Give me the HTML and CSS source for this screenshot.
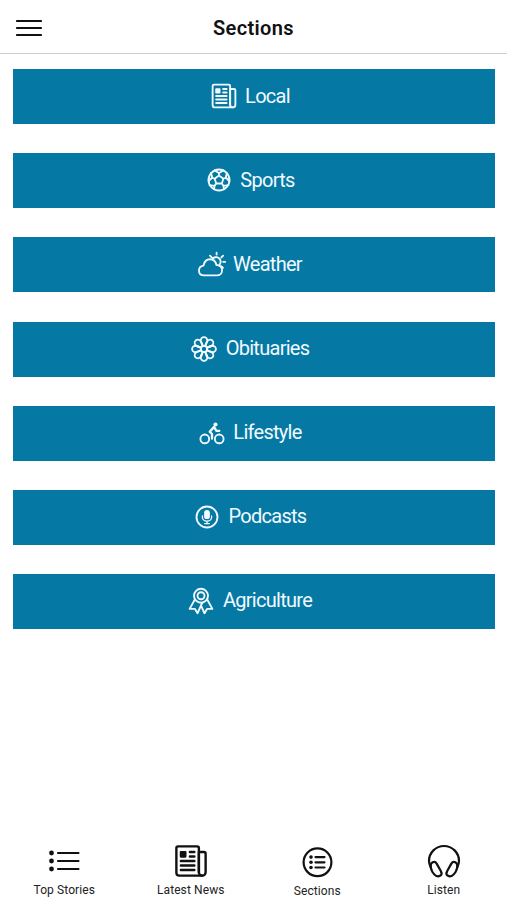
FILE: index.html
```html
<!DOCTYPE html>
<html lang="en">
<head>
<meta charset="utf-8">
<title>Sections</title>
<link rel="stylesheet" href="styles.css">
</head>
<body>
<svg class="defs" aria-hidden="true">
  <symbol id="news" viewBox="0 0 512 512">
    <path d="M368 416V72a24 24 0 0 0-24-24H72a24 24 0 0 0-24 24v352a40 40 0 0 0 40 40h328"/>
    <path d="M416 464a48 48 0 0 1-48-48V128h72a24 24 0 0 1 24 24v264a48 48 0 0 1-48 48z"/>
    <path d="M240 128h64M240 192h64M112 256h192M112 320h192M112 384h192"/>
    <rect class="solid" x="96" y="112" width="96" height="96" rx="16"/>
  </symbol>
</svg>
<header class="header">
  <svg class="menu" viewBox="0 0 26 18"><path d="M1 2h24M1 9h24M1 16h24"/></svg>
  <h1 class="title">Sections</h1>
</header>
<main class="sections">
  <a class="section"><svg class="icon"><use href="#news"/></svg><span>Local</span></a>
  <a class="section">
    <svg class="icon" viewBox="0 0 512 512"><circle cx="256" cy="256" r="192"/><path d="M256 175l-80 58 29 87h102l29-87zM256 175v-48M176 233l-45-18M205 320l-30 42M307 320l30 42M336 233l45-18M175 82l81 45 81-45M66 274l65-59-18-88M166 425l9-63-91-12M346 425l-9-63 91-12M446 274l-65-59 18-88"/></svg>
    <span>Sports</span></a>
  <a class="section">
    <svg class="icon" viewBox="0 0 512 512"><path d="M346 464H112c-53 0-94-30-94-86 0-54 39-86 82-92 14-72 60-116 120-116 63 0 103 44 117 104 56 2 103 34 103 94 0 64-46 96-94 96z"/><path d="M262 170a82 82 0 1 1 134 94M340 48v36M460 104l-32 32M220 104l30 30M460 216h36M430 300l26 26"/></svg>
    <span>Weather</span></a>
  <a class="section">
    <svg class="icon" viewBox="0 0 512 512"><circle cx="256" cy="256" r="58"/><path id="petal" d="M238 202c-24-32-42-66-42-96 0-36 27-68 60-68s60 32 60 68c0 30-18 64-42 96"/><use href="#petal" transform="rotate(45 256 256)"/><use href="#petal" transform="rotate(90 256 256)"/><use href="#petal" transform="rotate(135 256 256)"/><use href="#petal" transform="rotate(180 256 256)"/><use href="#petal" transform="rotate(225 256 256)"/><use href="#petal" transform="rotate(270 256 256)"/><use href="#petal" transform="rotate(315 256 256)"/></svg>
    <span>Obituaries</span></a>
  <a class="section">
    <svg class="icon" viewBox="0 0 512 512"><circle cx="124" cy="364" r="80"/><circle cx="388" cy="364" r="80"/><path class="bold" d="M256 360v-86l-42-42 80-88 40 72h56"/><circle class="solid" cx="320" cy="100" r="38"/></svg>
    <span>Lifestyle</span></a>
  <a class="section">
    <svg class="icon" viewBox="0 0 512 512"><circle cx="256" cy="256" r="192"/><rect class="solid" x="203" y="126" width="106" height="168" rx="53"/><path class="thin" d="M172 236v20c0 44 36 76 84 76s84-32 84-76v-20M256 332v44M214 376h84"/></svg>
    <span>Podcasts</span></a>
  <a class="section">
    <svg class="icon" viewBox="0 0 512 512"><circle cx="256" cy="160" r="128"/><circle cx="256" cy="160" r="64"/><path d="M144 228L48 400l87 0a16 16 0 0 1 14 8l43 72 88-194M367 224l97 176h-87a16 16 0 0 0-14 8l-43 72-64-141"/></svg>
    <span>Agriculture</span></a>
</main>
<nav class="tabs">
  <a class="tab"><svg class="tab-icon" viewBox="0 0 36 36"><path d="M12 10h20.500M12 18h20.500M12 26h20.500"/><circle class="solid" cx="5.500" cy="10" r="2.400"/><circle class="solid" cx="5.500" cy="18" r="2.400"/><circle class="solid" cx="5.500" cy="26" r="2.400"/></svg><span>Top Stories</span></a>
  <a class="tab"><svg class="tab-icon news"><use href="#news"/></svg><span>Latest News</span></a>
  <a class="tab low"><svg class="tab-icon" viewBox="0 0 36 36"><circle cx="18.500" cy="18.300" r="13.900"/><path d="M16.500 13.100h9M16.500 18.300h9M16.500 23.500h9"/><circle class="solid" cx="12" cy="13.100" r="1.800"/><circle class="solid" cx="12" cy="18.300" r="1.800"/><circle class="solid" cx="12" cy="23.500" r="1.800"/></svg><span>Sections</span></a>
  <a class="tab"><svg class="tab-icon" viewBox="0 0 36 36"><path d="M4.800 24.500C3.600 22 3 20 3 18a15 15 0 0 1 30 0c0 2-.6 4-1.800 6.500"/><path d="M6.600 19.300c1.500-.8 3-.4 3.900 1.100l4.300 7.600c1.100 2 .8 3.900-.8 4.800-2.400 1.400-5.500-.3-7.700-4-2.200-4-2.200-8.100.3-9.500zM29.400 19.300c-1.500-.8-3-.4-3.900 1.100L21.200 28c-1.100 2-.8 3.900.8 4.800 2.400 1.400 5.500-.3 7.700-4 2.200-4 2.200-8.100-.3-9.500z"/></svg><span>Listen</span></a>
</nav>
</body>
</html>
```
FILE: styles.css
```css
* { box-sizing: border-box; }
body {
  margin: 0;
  height: 900px;
  display: flex;
  flex-direction: column;
  background: #fff;
  color: #111;
  font-family: Roboto, "Liberation Sans", sans-serif;
  overflow: hidden;
}
svg { fill: none; stroke: currentColor; stroke-linecap: round; stroke-linejoin: round; }
.solid { fill: currentColor; stroke: none; }
.defs { display: none; }
.header {
  height: 54px;
  flex: none;
  display: grid;
  grid-template-columns: 58px 1fr 58px;
  align-items: center;
  padding-top: 2px;
  border-bottom: 1px solid #ccc;
}
.menu { width: 26px; height: 18px; margin-left: 16px; stroke-width: 2.2; }
.title { margin: 0; text-align: center; font-size: 20px; line-height: 24px; font-weight: 600; letter-spacing: 0.35px; }
.sections {
  display: flex;
  flex-direction: column;
  gap: 29.05px;
  padding: 15.4px 12.5px 0 13px;
}
.section {
  height: 55px;
  display: flex;
  align-items: center;
  justify-content: center;
  gap: 7.5px;
  padding-right: 8px;
  background: #0578a3;
  color: #f0faff;
  font-size: 20px;
  letter-spacing: -0.72px;
}
.section span { margin-top: -2px; }
.icon { width: 28px; height: 28px; margin-top: -1px; stroke-width: 34; }
.thin { stroke-width: 24; }
.bold { stroke-width: 42; }
.tabs {
  margin-top: auto;
  height: 57px;
  display: grid;
  grid-template-columns: repeat(4, 126.5px);
}
.tab {
  display: flex;
  flex-direction: column;
  align-items: center;
  padding-left: 2px;
  font-size: 12px;
  line-height: 16px;
  letter-spacing: 0.1px;
  color: #222;
}
.tab-icon { width: 36px; height: 36px; margin-bottom: 3px; color: #111; stroke-width: 2.2; }
.news { stroke-width: 34; }
.low { padding-top: 1px; }
```
